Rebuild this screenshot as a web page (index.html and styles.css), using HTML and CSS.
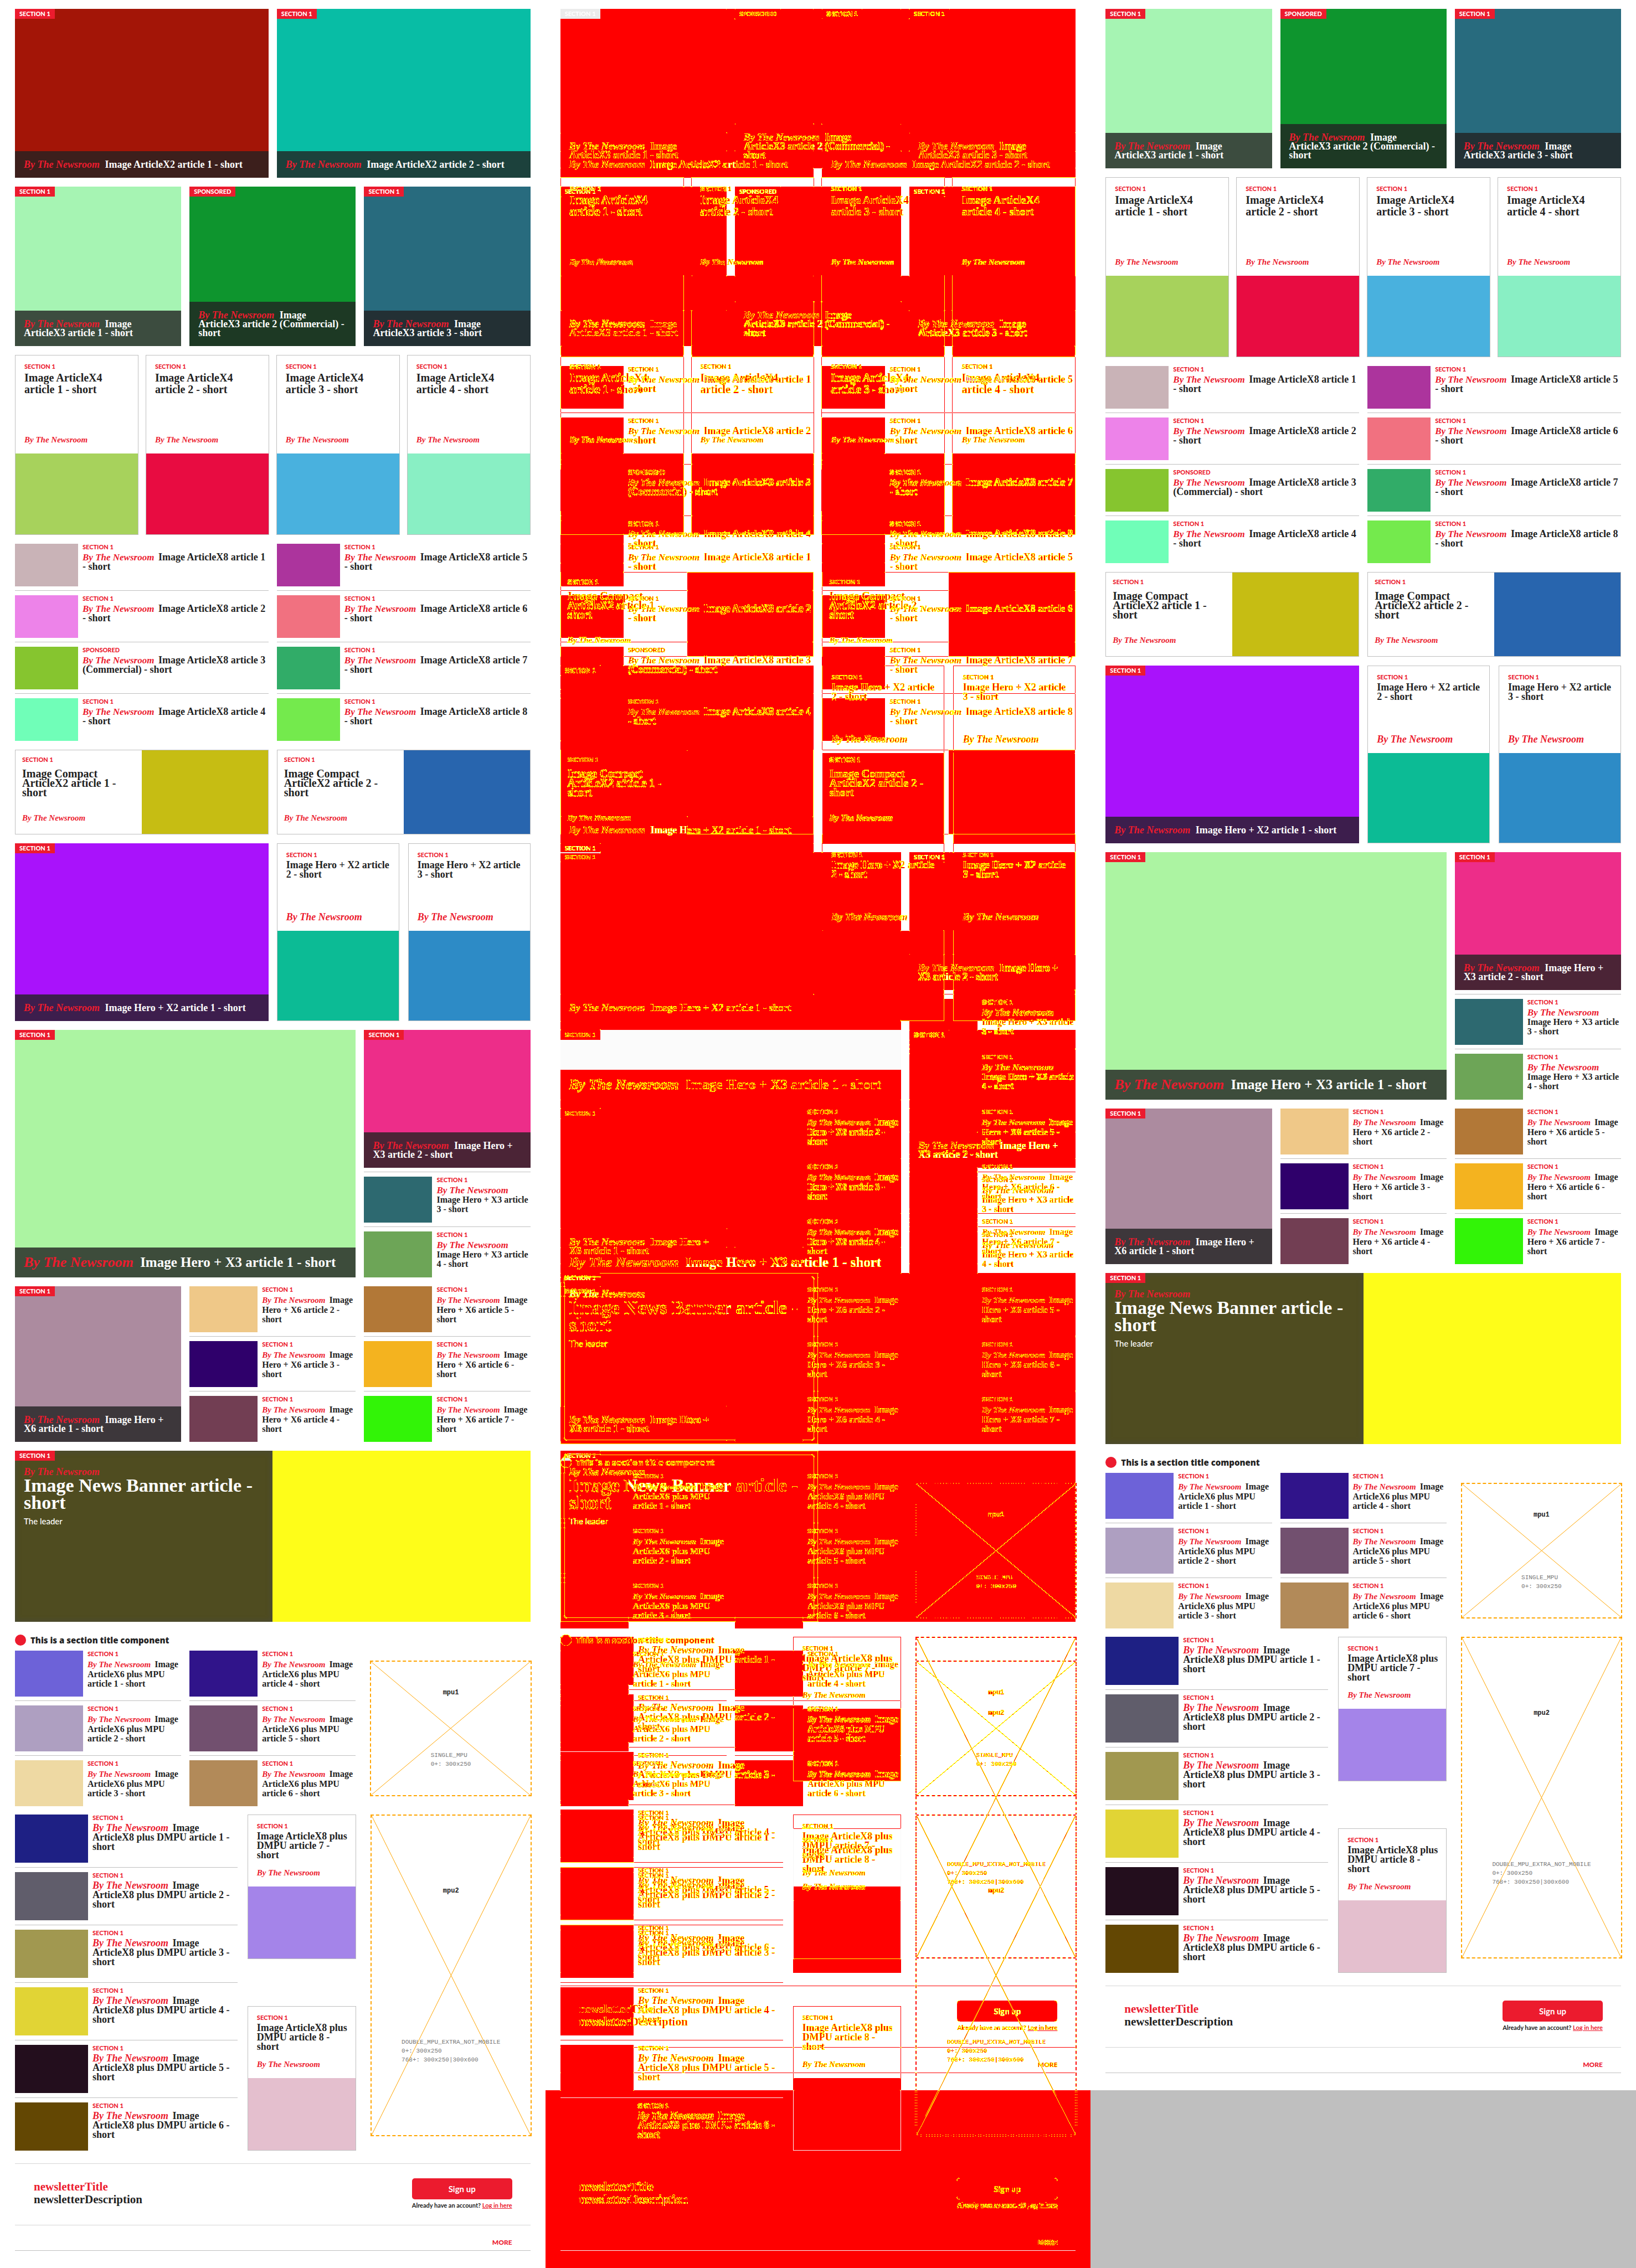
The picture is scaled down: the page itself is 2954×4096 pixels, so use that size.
FILE: index.html
```html
<!DOCTYPE html>
<html lang="en">
<head>
<meta charset="utf-8">
<meta name="viewport" content="width=device-width, initial-scale=1">
<title>Slices comparison</title>
<link rel="stylesheet" href="styles.css">
</head>
<body>
<svg class="defs" aria-hidden="true">
  <filter id="pixel-diff" x="0" y="0" width="100%" height="100%" color-interpolation-filters="sRGB">
    <!-- amount of change, held in the alpha channel -->
    <feColorMatrix in="SourceGraphic" result="amount" values="0 0 0 0 0  0 0 0 0 0  0 0 0 0 0  .34 .4 .26 0 0"/>
    <feComponentTransfer in="amount" result="changed"><feFuncA type="linear" slope="255" intercept="-3"/></feComponentTransfer>
    <!-- soft pixels lie strictly between the darkest and lightest neighbour -->
    <feMorphology in="amount" operator="erode" radius="1" result="low"/>
    <feMorphology in="amount" operator="dilate" radius="1" result="high"/>
    <feComposite in="amount" in2="low" operator="arithmetic" k2="1" k3="-1" result="above"/>
    <feComposite in="high" in2="amount" operator="arithmetic" k2="1" k3="-1" result="below"/>
    <feComponentTransfer in="above" result="aboveMask"><feFuncA type="linear" slope="120" intercept="-1"/></feComponentTransfer>
    <feComponentTransfer in="below" result="belowMask"><feFuncA type="linear" slope="120" intercept="-1"/></feComponentTransfer>
    <feComposite in="aboveMask" in2="belowMask" operator="in" result="soft"/>
    <!-- the same test on the red channel, which catches red text on dark captions -->
    <feColorMatrix in="SourceGraphic" result="amountR" values="0 0 0 0 0  0 0 0 0 0  0 0 0 0 0  1 0 0 0 0"/>
    <feMorphology in="amountR" operator="erode" radius="1" result="lowR"/>
    <feMorphology in="amountR" operator="dilate" radius="1" result="highR"/>
    <feComposite in="amountR" in2="lowR" operator="arithmetic" k2="1" k3="-1" result="aboveR"/>
    <feComposite in="highR" in2="amountR" operator="arithmetic" k2="1" k3="-1" result="belowR"/>
    <feComponentTransfer in="aboveR" result="aboveMaskR"><feFuncA type="linear" slope="60" intercept="-1"/></feComponentTransfer>
    <feComponentTransfer in="belowR" result="belowMaskR"><feFuncA type="linear" slope="60" intercept="-1"/></feComponentTransfer>
    <feComposite in="aboveMaskR" in2="belowMaskR" operator="in" result="softR"/>
    <feMerge result="edges"><feMergeNode in="soft"/><feMergeNode in="softR"/></feMerge>
    <feFlood flood-color="#f00"/>
    <feComposite in2="changed" operator="in" result="red"/>
    <feFlood flood-color="#ff0"/>
    <feComposite in2="edges" operator="in"/>
    <feComposite in2="changed" operator="in" result="yellow"/>
    <feMerge><feMergeNode in="red"/><feMergeNode in="yellow"/></feMerge>
  </filter>
</svg>

<main class="compare">
<section class="panel" id="before" aria-label="Before">
<div class="page">

  <div class="row cols-2 first-slice">
    <article class="hero h-x2 brick"><span class="tag">SECTION 1</span><h3 class="caption"><em>By The Newsroom</em> Image ArticleX2 article 1 - short</h3></article>
    <article class="hero h-x2 teal"><span class="tag">SECTION 1</span><h3 class="caption"><em>By The Newsroom</em> Image ArticleX2 article 2 - short</h3></article>
  </div>

  <div class="row cols-3">
    <article class="hero h-x3 mint"><span class="tag">SECTION 1</span><h3 class="caption"><em>By The Newsroom</em> Image ArticleX3 article 1 - short</h3></article>
    <article class="hero h-x3 green"><span class="tag">SPONSORED</span><h3 class="caption"><em>By The Newsroom</em> Image ArticleX3 article 2 (Commercial) - short</h3></article>
    <article class="hero h-x3 petrol"><span class="tag">SECTION 1</span><h3 class="caption"><em>By The Newsroom</em> Image ArticleX3 article 3 - short</h3></article>
  </div>

  <div class="row cols-4">
    <article class="card card-x4"><div class="body"><span class="label">SECTION 1</span><h3>Image ArticleX4 article 1 - short</h3><em>By The Newsroom</em></div><div class="pic olive"></div></article>
    <article class="card card-x4"><div class="body"><span class="label">SECTION 1</span><h3>Image ArticleX4 article 2 - short</h3><em>By The Newsroom</em></div><div class="pic crimson"></div></article>
    <article class="card card-x4"><div class="body"><span class="label">SECTION 1</span><h3>Image ArticleX4 article 3 - short</h3><em>By The Newsroom</em></div><div class="pic sky"></div></article>
    <article class="card card-x4"><div class="body"><span class="label">SECTION 1</span><h3>Image ArticleX4 article 4 - short</h3><em>By The Newsroom</em></div><div class="pic aqua"></div></article>
  </div>

  <div class="row cols-2">
    <div class="list list-x8">
      <article class="item"><div class="pic dusk"></div><div><span class="label">SECTION 1</span><h3><em>By The Newsroom</em> Image ArticleX8 article 1 - short</h3></div></article>
      <article class="item"><div class="pic orchid"></div><div><span class="label">SECTION 1</span><h3><em>By The Newsroom</em> Image ArticleX8 article 2 - short</h3></div></article>
      <article class="item"><div class="pic leaf"></div><div><span class="label">SPONSORED</span><h3><em>By The Newsroom</em> Image ArticleX8 article 3 (Commercial) - short</h3></div></article>
      <article class="item"><div class="pic seafoam"></div><div><span class="label">SECTION 1</span><h3><em>By The Newsroom</em> Image ArticleX8 article 4 - short</h3></div></article>
    </div>
    <div class="list list-x8">
      <article class="item"><div class="pic magenta"></div><div><span class="label">SECTION 1</span><h3><em>By The Newsroom</em> Image ArticleX8 article 5 - short</h3></div></article>
      <article class="item"><div class="pic coral"></div><div><span class="label">SECTION 1</span><h3><em>By The Newsroom</em> Image ArticleX8 article 6 - short</h3></div></article>
      <article class="item"><div class="pic emerald"></div><div><span class="label">SECTION 1</span><h3><em>By The Newsroom</em> Image ArticleX8 article 7 - short</h3></div></article>
      <article class="item"><div class="pic lime"></div><div><span class="label">SECTION 1</span><h3><em>By The Newsroom</em> Image ArticleX8 article 8 - short</h3></div></article>
    </div>
  </div>

  <div class="row cols-2">
    <article class="card compact"><div class="body"><span class="label">SECTION 1</span><h3>Image Compact ArticleX2 article 1 - short</h3><em>By The Newsroom</em></div><div class="pic mustard"></div></article>
    <article class="card compact"><div class="body"><span class="label">SECTION 1</span><h3>Image Compact ArticleX2 article 2 - short</h3><em>By The Newsroom</em></div><div class="pic cobalt"></div></article>
  </div>

  <div class="row cols-2">
    <article class="hero h-hx2 violet"><span class="tag">SECTION 1</span><h3 class="caption"><em>By The Newsroom</em> Image Hero + X2 article 1 - short</h3></article>
    <div class="pair">
      <article class="card card-hx2"><div class="body"><span class="label">SECTION 1</span><h3>Image Hero + X2 article 2 - short</h3><em>By The Newsroom</em></div><div class="pic jade"></div></article>
      <article class="card card-hx2"><div class="body"><span class="label">SECTION 1</span><h3>Image Hero + X2 article 3 - short</h3><em>By The Newsroom</em></div><div class="pic azure"></div></article>
    </div>
  </div>

  <div class="row cols-3">
    <article class="hero big wide pistachio"><span class="tag">SECTION 1</span><h3 class="caption"><em>By The Newsroom</em> Image Hero + X3 article 1 - short</h3></article>
    <div class="list list-hx3">
      <article class="hero pink"><span class="tag">SECTION 1</span><h3 class="caption"><em>By The Newsroom</em> Image Hero + X3 article 2 - short</h3></article>
      <article class="item"><div class="pic deepsea"></div><div><span class="label">SECTION 1</span><h3><em>By The Newsroom</em> Image Hero + X3 article 3 - short</h3></div></article>
      <article class="item"><div class="pic moss"></div><div><span class="label">SECTION 1</span><h3><em>By The Newsroom</em> Image Hero + X3 article 4 - short</h3></div></article>
    </div>
  </div>

  <div class="row cols-3">
    <article class="hero mauve"><span class="tag">SECTION 1</span><h3 class="caption"><em>By The Newsroom</em> Image Hero + X6 article 1 - short</h3></article>
    <div class="list">
      <article class="item"><div class="pic peach"></div><div><span class="label">SECTION 1</span><h3><em>By The Newsroom</em> Image Hero + X6 article 2 - short</h3></div></article>
      <article class="item"><div class="pic indigo"></div><div><span class="label">SECTION 1</span><h3><em>By The Newsroom</em> Image Hero + X6 article 3 - short</h3></div></article>
      <article class="item"><div class="pic wine"></div><div><span class="label">SECTION 1</span><h3><em>By The Newsroom</em> Image Hero + X6 article 4 - short</h3></div></article>
    </div>
    <div class="list">
      <article class="item"><div class="pic copper"></div><div><span class="label">SECTION 1</span><h3><em>By The Newsroom</em> Image Hero + X6 article 5 - short</h3></div></article>
      <article class="item"><div class="pic amber"></div><div><span class="label">SECTION 1</span><h3><em>By The Newsroom</em> Image Hero + X6 article 6 - short</h3></div></article>
      <article class="item"><div class="pic neon"></div><div><span class="label">SECTION 1</span><h3><em>By The Newsroom</em> Image Hero + X6 article 7 - short</h3></div></article>
    </div>
  </div>

  <article class="banner">
    <div class="copy"><span class="tag">SECTION 1</span><em>By The Newsroom</em><h2>Image News Banner article - short</h2><p>The leader</p></div>
    <div class="pic yellow"></div>
  </article>

  <h2 class="section-title">This is a section title component</h2>

  <div class="row cols-3 with-mpu">
    <div class="list">
      <article class="item"><div class="pic iris"></div><div><span class="label">SECTION 1</span><h3><em>By The Newsroom</em> Image ArticleX6 plus MPU article 1 - short</h3></div></article>
      <article class="item"><div class="pic lavender"></div><div><span class="label">SECTION 1</span><h3><em>By The Newsroom</em> Image ArticleX6 plus MPU article 2 - short</h3></div></article>
      <article class="item"><div class="pic sand"></div><div><span class="label">SECTION 1</span><h3><em>By The Newsroom</em> Image ArticleX6 plus MPU article 3 - short</h3></div></article>
    </div>
    <div class="list">
      <article class="item"><div class="pic navy"></div><div><span class="label">SECTION 1</span><h3><em>By The Newsroom</em> Image ArticleX6 plus MPU article 4 - short</h3></div></article>
      <article class="item"><div class="pic plum"></div><div><span class="label">SECTION 1</span><h3><em>By The Newsroom</em> Image ArticleX6 plus MPU article 5 - short</h3></div></article>
      <article class="item"><div class="pic tan"></div><div><span class="label">SECTION 1</span><h3><em>By The Newsroom</em> Image ArticleX6 plus MPU article 6 - short</h3></div></article>
    </div>
    <aside class="ad ad-single">
      <svg class="cross" preserveAspectRatio="none" viewBox="0 0 100 100" aria-hidden="true"><path d="M0 0 100 100M100 0 0 100"/></svg>
      <strong>mpu1</strong>
      <pre>SINGLE_MPU
0+: 300x250</pre>
    </aside>
  </div>

  <div class="row dmpu">
    <div class="list list-dmpu">
      <article class="item"><div class="pic royal"></div><div><span class="label">SECTION 1</span><h3><em>By The Newsroom</em> Image ArticleX8 plus DMPU article 1 - short</h3></div></article>
      <article class="item"><div class="pic slate"></div><div><span class="label">SECTION 1</span><h3><em>By The Newsroom</em> Image ArticleX8 plus DMPU article 2 - short</h3></div></article>
      <article class="item"><div class="pic khaki"></div><div><span class="label">SECTION 1</span><h3><em>By The Newsroom</em> Image ArticleX8 plus DMPU article 3 - short</h3></div></article>
      <article class="item"><div class="pic lemon"></div><div><span class="label">SECTION 1</span><h3><em>By The Newsroom</em> Image ArticleX8 plus DMPU article 4 - short</h3></div></article>
      <article class="item"><div class="pic night"></div><div><span class="label">SECTION 1</span><h3><em>By The Newsroom</em> Image ArticleX8 plus DMPU article 5 - short</h3></div></article>
      <article class="item"><div class="pic umber"></div><div><span class="label">SECTION 1</span><h3><em>By The Newsroom</em> Image ArticleX8 plus DMPU article 6 - short</h3></div></article>
    </div>
    <div class="ends">
      <article class="card card-dmpu"><div class="body"><span class="label">SECTION 1</span><h3>Image ArticleX8 plus DMPU article 7 - short</h3><em>By The Newsroom</em></div><div class="pic lilac"></div></article>
      <article class="card card-dmpu"><div class="body"><span class="label">SECTION 1</span><h3>Image ArticleX8 plus DMPU article 8 - short</h3><em>By The Newsroom</em></div><div class="pic rose"></div></article>
    </div>
    <aside class="ad ad-double">
      <svg class="cross" preserveAspectRatio="none" viewBox="0 0 100 100" aria-hidden="true"><path d="M0 0 100 100M100 0 0 100"/></svg>
      <strong>mpu2</strong>
      <pre>DOUBLE_MPU_EXTRA_NOT_MOBILE
0+: 300x250
768+: 300x250|300x600</pre>
    </aside>
  </div>

  <section class="newsletter">
    <div class="pitch"><h3>newsletterTitle</h3><p>newsletterDescription</p></div>
    <div class="join"><button type="button">Sign up</button><p>Already have an account? <a href="#login">Log in here</a></p></div>
  </section>
  <nav class="more"><a href="#more">MORE</a></nav>

</div>
</section>

<section class="stack" id="difference" aria-label="Difference"></section>
<section class="panel" id="after" aria-label="After"></section>
</main>
<script src="compare.js"></script>
</body>
</html>
```
FILE: styles.css
```css
* { box-sizing: border-box; }
body { margin: 0; background: #fff; color: #222; font-family: "Liberation Serif", "Times New Roman", serif; }
h2, h3, p, pre { margin: 0; }
.defs { position: absolute; width: 0; height: 0; }

.compare { display: grid; grid-template-columns: repeat(3, minmax(0, 1fr)); min-height: 100vh; }
.panel { background: #bfbfbf; }
.page { background: #fff; padding: 16px 27px 31px; }

/* both versions share one cell; the upper one is subtracted from the lower */
.stack { display: grid; background: #fff; }
.stack > * { grid-area: 1 / 1; }
.ghost { filter: grayscale(1); opacity: .1; }
.delta { display: grid; isolation: isolate; filter: url(#pixel-diff); }
.delta > .panel { grid-area: 1 / 1; }
.delta > .panel + .panel { mix-blend-mode: difference; }

/* slices */
.row { display: grid; margin-bottom: 16px; }
.cols-2 { grid-template-columns: repeat(2, minmax(0, 1fr)); column-gap: 15px; }
.cols-3 { grid-template-columns: repeat(3, minmax(0, 1fr)); column-gap: 15px; }
.cols-4 { grid-template-columns: repeat(4, minmax(0, 1fr)); column-gap: 13px; }
.wide { grid-column: span 2; }
.pair { display: grid; grid-template-columns: 1fr 1fr; gap: 16px; }

em { color: #ec1b2e; font-style: italic; font-weight: 700; }
h3 { font-size: 18px; line-height: 17px; font-weight: 700; }
.tag, .label { font-family: Lato, sans-serif; font-weight: 900; font-size: 11px; }
.tag { background: #ec1b2e; color: #fff; line-height: 18px; padding: 0 8px; justify-self: start; align-self: start; }
.label { display: block; color: #ec1b2e; line-height: 11px; margin-bottom: 5px; }

.hero { display: grid; grid-template-rows: 1fr auto; }
.caption { background: rgba(34, 34, 34, .8); color: #fff; line-height: 16px; padding: 16px; }
.caption em { margin-right: 5px; }
.h-x2 { min-height: 305px; }
.h-x3 { min-height: 288px; }
.h-hx2 { min-height: 321px; }
.big .caption { font-size: 25px; line-height: 22px; }
.big .caption em { font-size: 26px; margin-right: 6px; }

.card { display: flex; flex-direction: column; border: 1px solid #bfbfbf; }
.card .body { flex: 1; display: flex; flex-direction: column; padding: 14px 8px 16px 16px; }
.card .body em { margin-top: auto; font-size: 15px; line-height: 17px; }
.card-x4 { min-height: 325px; }
.card-x4 h3 { font-size: 20px; line-height: 21px; }
.card-x4 .body { padding-right: 16px; }
.card-x4 .pic { height: 146px; }
.card-hx2 .pic { height: 162px; }
.card-hx2 .body em { font-size: 18px; }
.card-dmpu { min-height: 261px; }
.card-dmpu .pic { height: 130px; }
.compact { display: grid; grid-template-columns: 1fr 1fr; min-height: 153px; }
.compact .body { padding: 11px 12px 20px; }
.compact .label { margin-bottom: 12px; }
.compact h3 { font-size: 20px; }

.item { display: grid; grid-template-columns: 123px minmax(0, 1fr); column-gap: 8px; }
.item .pic { height: 83px; }
.item h3 { font-size: 16px; }
.item h3 em { font-size: 15px; margin-right: 3px; }
.item + .item, .hero + .item { border-top: 1px solid #bfbfbf; margin-top: 7px; padding-top: 8px; }
.list-x8 .item { grid-template-columns: 114px minmax(0, 1fr); }
.list-x8 .pic { height: 77px; }
.list-x8 h3, .list-dmpu h3 { font-size: 18px; }
.list-x8 h3 em { font-size: 17px; }
.list-hx3 .hero { min-height: 249px; }
.list-hx3 .item h3 em { font-size: 17px; }
.list-dmpu { margin-right: 3px; }
.list-dmpu .item { grid-template-columns: 132px minmax(0, 1fr); }
.list-dmpu .item + .item { margin-top: 8px; }
.list-dmpu .pic { height: 87px; }
.list-dmpu .item h3 em { font-size: 18px; }

.banner { display: grid; grid-template-columns: 1fr 1fr; min-height: 309px; }
.banner .copy { position: relative; background: #4f4c20; box-shadow: inset 0 0 8px 3px #4b4b32; color: #fff; display: flex; flex-direction: column; padding: 0 16px; }
.banner .tag { align-self: flex-start; margin: 0 0 11px -16px; }
.banner em { font-size: 18px; line-height: 18px; }
.banner h2 { font-size: 34px; line-height: 31px; }
.banner p { font: 500 15px/20px Lato, sans-serif; margin-top: 8px; }

.delta .copy { box-shadow: inset 0 0 0 1px #757350; }
.delta .copy::after { content: ""; position: absolute; inset: 7px; border: 1px solid #67643c; border-radius: 5px; box-shadow: 0 0 0 1px #7b7850; }

.section-title { display: flex; align-items: center; gap: 8px; margin: 23px 0 9px; font: 800 15px/20px "Open Sans", sans-serif; }
.section-title::before { content: ""; width: 20px; height: 20px; border-radius: 50%; background: #ec1b2e; }

.with-mpu { margin-bottom: 15px; }
.dmpu { grid-template-columns: minmax(0, 405fr) minmax(0, 196fr) minmax(0, 300fr); column-gap: 15px; margin-bottom: 23px; }
.ends { display: flex; flex-direction: column; justify-content: space-between; }
.ad { position: relative; display: flex; flex-direction: column; justify-content: space-around; align-items: center; align-self: start; margin: 0 -2px 0 11px; border: 2px dashed #ffa500; font-family: "Liberation Mono", monospace; }
.ad strong { font-size: 12px; line-height: 16px; }
.ad pre { font: 11px/16px "Liberation Mono", monospace; color: #777; }
.ad-single { margin-top: 18px; min-height: 245px; }
.ad-double { min-height: 581px; }
.cross { position: absolute; inset: 0; width: 100%; height: 100%; }
.cross path { stroke: #ffa500; stroke-width: 1px; vector-effect: non-scaling-stroke; fill: none; }

.newsletter { display: flex; justify-content: space-between; align-items: flex-start; border: solid #d5d5d5; border-width: 1px 0; padding: 26px 33px 28px 34px; }
.pitch { padding-top: 4px; font-size: 21px; line-height: 23px; font-weight: 700; }
.pitch h3 { color: #ec1b2e; font: inherit; }
.join { width: 181px; text-align: center; font-family: Lato, sans-serif; }
.join button { display: block; width: 100%; height: 38px; border: 0; border-radius: 5px; background: #ec1b2e; color: #fff; font: 700 15px/20px Lato, sans-serif; }
.join p { font-size: 11px; line-height: 14px; font-weight: 700; margin-top: 4px; white-space: nowrap; }
.join a { color: #ec1b2e; }
.more { display: flex; justify-content: flex-end; border-bottom: 1px solid #bfbfbf; padding: 24px 33px 7px; }
.more a { color: #ec1b2e; text-decoration: none; font: 900 12px/14px Lato, sans-serif; }

/* picture fills */
.brick { background: #a31507; } .teal { background: #08bda5; }
.mint { background: #a6f4b3; } .green { background: #0e952e; } .petrol { background: #286b7e; }
.olive { background: #a7d25c; } .crimson { background: #e80c41; } .sky { background: #49b1de; } .aqua { background: #89efc4; }
.dusk { background: #c9b3b7; } .orchid { background: #ed83e9; } .leaf { background: #86c52f; } .seafoam { background: #70feb8; }
.magenta { background: #ac349d; } .coral { background: #f17180; } .emerald { background: #31ac68; } .lime { background: #74ea4d; }
.mustard { background: #c6bd13; } .cobalt { background: #2865ae; }
.violet { background: #a912fb; } .jade { background: #0cbb95; } .azure { background: #2d8bc6; }
.pistachio { background: #acf4a2; } .pink { background: #ed2d89; } .deepsea { background: #2d6970; } .moss { background: #6da557; }
.mauve { background: #ac8b9f; } .peach { background: #efc888; } .indigo { background: #2f006b; } .wine { background: #723e53; }
.copper { background: #b27837; } .amber { background: #f4b31f; } .neon { background: #32f407; } .yellow { background: #fefd19; }
.iris { background: #6d62d8; } .lavender { background: #ae9fc1; } .sand { background: #eed9a3; }
.navy { background: #30148a; } .plum { background: #72506f; } .tan { background: #b28a59; }
.royal { background: #1e2084; } .slate { background: #605d6b; } .khaki { background: #a19850; } .lemon { background: #e1d435; }
.night { background: #230e1d; } .umber { background: #634703; } .lilac { background: #a484e9; } .rose { background: #e4bfce; }
```
FILE: compare.js
```js
// The later version is the same page without its first slice.
const before = document.querySelector('#before .page');
const after = before.cloneNode(true);
after.querySelector('.first-slice').remove();
document.querySelector('#after').append(after);

function panel(page, name) {
  const el = document.createElement('div');
  el.className = name;
  el.append(page.cloneNode(true));
  return el;
}

// Unchanged pixels show through as a pale grey copy under the difference.
const ghost = panel(before, 'ghost');
ghost.setAttribute('aria-hidden', 'true');
const delta = document.createElement('div');
delta.className = 'delta';
delta.append(panel(before, 'panel'), panel(after, 'panel'));
document.querySelector('#difference').append(ghost, delta);
```
